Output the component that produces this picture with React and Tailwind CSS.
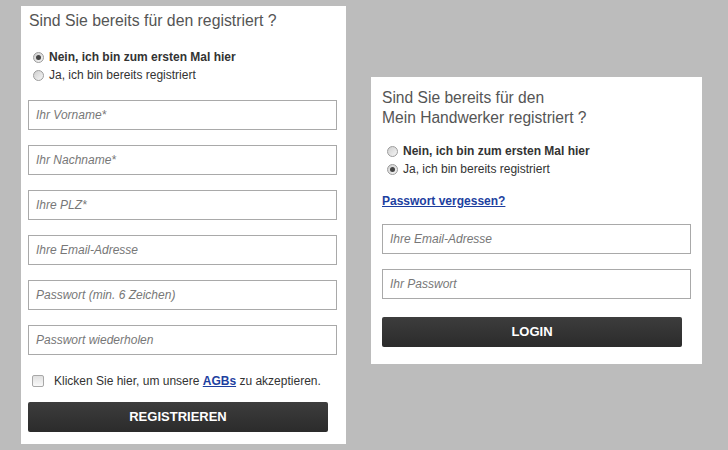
import React from "react";

const font = { fontFamily: '"Liberation Sans", Arial, sans-serif' };

function Radio({ checked }) {
  return (
    <span className="relative inline-flex h-[11px] w-[11px] shrink-0 items-center justify-center rounded-full border border-[#9c9c9c] bg-gradient-to-br from-[#cfcfcf] to-[#f6f6f6]">
      {checked && (
        <span className="h-[5px] w-[5px] rounded-full bg-[#444]" />
      )}
    </span>
  );
}

function Field({ placeholder }) {
  return (
    <div className="flex h-[30px] w-[309px] items-center border border-[#a9a9a9] bg-white pl-[7px] text-[12px] italic text-[#777]">
      {placeholder}
    </div>
  );
}

function Btn({ children }) {
  return (
    <div className="flex h-[30px] w-[300px] items-center justify-center rounded-[2px] bg-gradient-to-b from-[#3d3d3d] to-[#2b2b2b] text-[13px] font-bold text-white">
      {children}
    </div>
  );
}

export default function App() {
  return (
    <div className="flex h-[450px] w-[728px] items-start bg-[#bcbcbc]" style={font}>
      {/* Left panel */}
      <div className="ml-[21px] mt-[6px] flex h-[438px] w-[325px] flex-col bg-white pt-[6px]">
        <div className="pl-[8px] text-[15.8px] leading-[18px] text-[#555]">
          Sind Sie bereits für den registriert ?
        </div>
        <div className="mt-[18px] flex flex-col pl-[12px] text-[12px] text-[#333]">
          <label className="flex h-[18px] items-center gap-[5px] font-bold">
            <Radio checked />
            Nein, ich bin zum ersten Mal hier
          </label>
          <label className="flex h-[18px] items-center gap-[5px]">
            <Radio />
            Ja, ich bin bereits registriert
          </label>
        </div>
        <div className="mt-[16px] flex flex-col gap-[15px] pl-[7px]">
          <Field placeholder="Ihr Vorname*" />
          <Field placeholder="Ihr Nachname*" />
          <Field placeholder="Ihre PLZ*" />
          <Field placeholder="Ihre Email-Adresse" />
          <Field placeholder="Passwort (min. 6 Zeichen)" />
          <Field placeholder="Passwort wiederholen" />
        </div>
        <div className="mt-[17px] flex h-[18px] items-center gap-[10px] pl-[11px] text-[12px] text-[#333]">
          <span className="h-[12px] w-[12px] rounded-[2px] border border-[#a8a8a8] bg-gradient-to-b from-[#e0e0e0] to-[#f9f9f9]" />
          <span>
            Klicken Sie hier, um unsere{" "}
            <a className="font-bold text-[#1d3f9f] underline">AGBs</a> zu akzeptieren.
          </span>
        </div>
        <div className="mt-[12px] pl-[7px]">
          <Btn>REGISTRIEREN</Btn>
        </div>
      </div>

      {/* Right panel */}
      <div className="ml-[25px] mt-[77px] flex h-[287px] w-[331px] flex-col bg-white pl-[11px] pt-[11px]">
        <div className="text-[15.6px] leading-[20px] text-[#555]">
          Sind Sie bereits für den
          <br />
          Mein Handwerker registriert ?
        </div>
        <div className="mt-[14px] flex flex-col pl-[5px] text-[12px] text-[#333]">
          <label className="flex h-[18px] items-center gap-[5px] font-bold">
            <Radio />
            Nein, ich bin zum ersten Mal hier
          </label>
          <label className="flex h-[18px] items-center gap-[5px]">
            <Radio checked />
            Ja, ich bin bereits registriert
          </label>
        </div>
        <a className="mt-[16px] text-[12px] leading-[14px] font-bold text-[#1d3f9f] underline">
          Passwort vergessen?
        </a>
        <div className="mt-[16px] flex flex-col gap-[15px]">
          <Field placeholder="Ihre Email-Adresse" />
          <Field placeholder="Ihr Passwort" />
        </div>
        <div className="mt-[18px]">
          <Btn>LOGIN</Btn>
        </div>
      </div>
    </div>
  );
}
